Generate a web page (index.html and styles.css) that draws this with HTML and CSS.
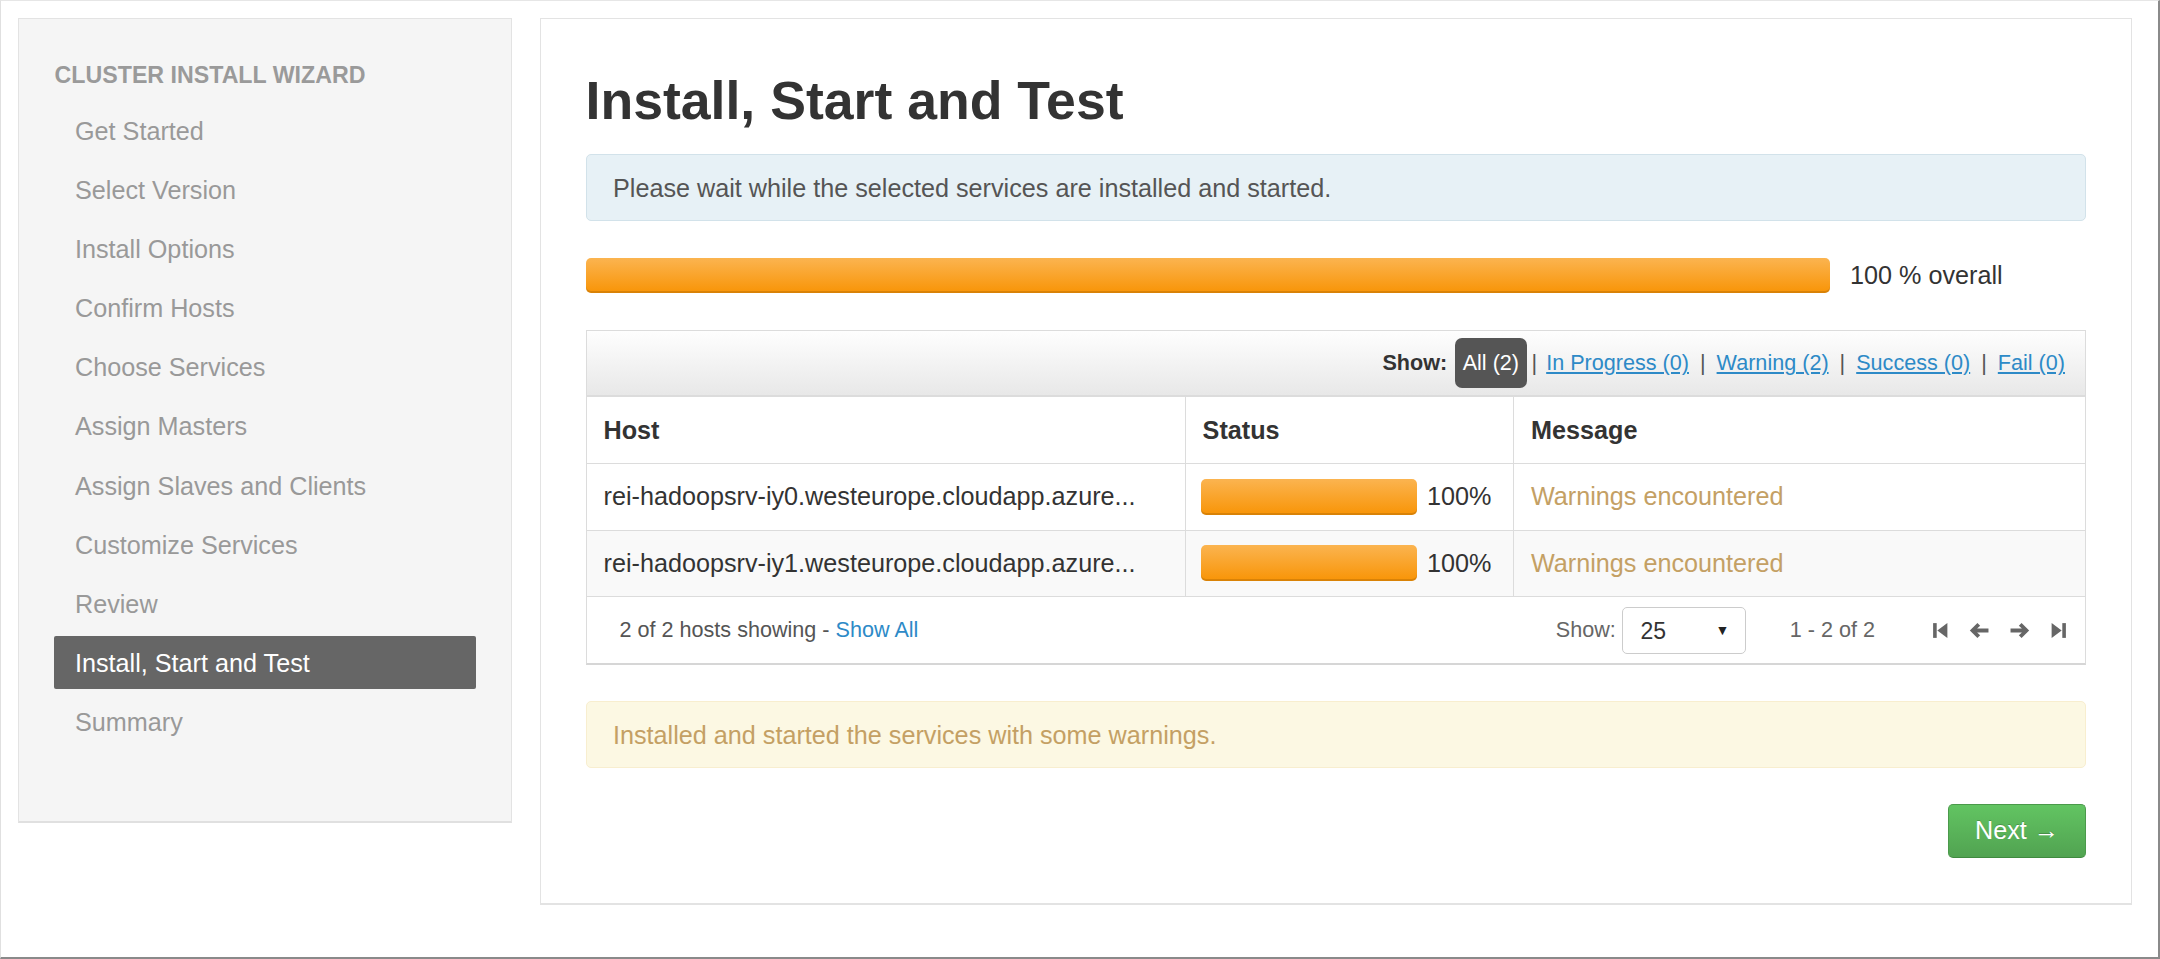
FILE: index.html
```html
<!DOCTYPE html>
<html lang="en">
<head>
<meta charset="utf-8">
<title>Install, Start and Test</title>
<link rel="stylesheet" href="styles.css">
</head>
<body>
<div class="window">
  <aside class="sidebar">
    <div class="nav-header">CLUSTER INSTALL WIZARD</div>
    <ul class="nav-list">
      <li>Get Started</li>
      <li>Select Version</li>
      <li>Install Options</li>
      <li>Confirm Hosts</li>
      <li>Choose Services</li>
      <li>Assign Masters</li>
      <li>Assign Slaves and Clients</li>
      <li>Customize Services</li>
      <li>Review</li>
      <li class="active">Install, Start and Test</li>
      <li>Summary</li>
    </ul>
  </aside>

  <main class="panel">
    <h1 class="title">Install, Start and Test</h1>
    <div class="alert alert-info">Please wait while the selected services are installed and started.</div>

    <div class="overall">
      <div class="bar bar-overall"></div>
      <span class="overall-label">100 % overall</span>
    </div>

    <div class="hosts">
      <div class="toolbar">
        <span class="show-label">Show:</span>
        <span class="badge">All (2)</span>
        <span class="sep first">|</span>
        <a class="filter" href="#">In Progress (0)</a>
        <span class="sep">|</span>
        <a class="filter" href="#">Warning (2)</a>
        <span class="sep">|</span>
        <a class="filter" href="#">Success (0)</a>
        <span class="sep">|</span>
        <a class="filter" href="#">Fail (0)</a>
      </div>
      <table class="host-table">
        <colgroup>
          <col class="col-host">
          <col class="col-status">
          <col class="col-msg">
        </colgroup>
        <thead>
          <tr><th>Host</th><th>Status</th><th>Message</th></tr>
        </thead>
        <tbody>
          <tr>
            <td>rei-hadoopsrv-iy0.westeurope.cloudapp.azure...</td>
            <td><div class="status"><div class="bar bar-row"></div><span>100%</span></div></td>
            <td class="warn-text">Warnings encountered</td>
          </tr>
          <tr class="odd">
            <td>rei-hadoopsrv-iy1.westeurope.cloudapp.azure...</td>
            <td><div class="status"><div class="bar bar-row"></div><span>100%</span></div></td>
            <td class="warn-text">Warnings encountered</td>
          </tr>
        </tbody>
      </table>
      <div class="table-footer">
        <span class="showing">2 of 2 hosts showing - <a href="#" class="link">Show All</a></span>
        <span class="footer-show">Show:</span>
        <div class="select"><span>25</span><span class="caret">&#9660;</span></div>
        <span class="range">1 - 2 of 2</span>
        <div class="pager">
          <svg class="pg-first" width="15" height="19" viewBox="0 0 14 18"><rect x="0" y="2" width="3.4" height="14"/><path d="M13.5 2 L4 9 L13.5 16 Z"/></svg>
          <svg class="pg-prev" width="20" height="17" viewBox="0 0 19 16"><path d="M8 0.8 L0.8 8 L8 15.2 L10.6 12.6 L7.7 9.8 H18.5 V6.2 H7.7 L10.6 3.4 Z"/></svg>
          <svg class="pg-next" width="20" height="17" viewBox="0 0 19 16"><path d="M11 0.8 L18.2 8 L11 15.2 L8.4 12.6 L11.3 9.8 H0.5 V6.2 H11.3 L8.4 3.4 Z"/></svg>
          <svg class="pg-last" width="15" height="19" viewBox="0 0 14 18"><path d="M0.5 2 L10 9 L0.5 16 Z"/><rect x="10.6" y="2" width="3.4" height="14"/></svg>
        </div>
      </div>
    </div>

    <div class="alert alert-warning">Installed and started the services with some warnings.</div>

    <div class="actions">
      <button class="btn-next">Next &rarr;</button>
    </div>
  </main>
</div>
</body>
</html>
```

FILE: styles.css
```css
* { box-sizing: border-box; }

html, body {
  margin: 0;
  padding: 0;
  background: #ffffff;
}

body {
  font-family: "Liberation Sans", Arial, Helvetica, sans-serif;
  color: #333333;
}

.window {
  width: 2160px;
  height: 959px;
  border-top: 1px solid #e6e6e6;
  border-left: 1px solid #e0e0e0;
  border-right: 2px solid #8a8a8a;
  border-bottom: 2px solid #8a8a8a;
  padding: 17px 26px 0 17px;
  display: flex;
  align-items: flex-start;
  gap: 28px;
  overflow: hidden;
}

/* ---------- Sidebar ---------- */
.sidebar {
  width: 494px;
  height: 805px;
  flex: none;
  background: #f5f5f5;
  border: 1px solid #e3e3e3;
  border-bottom: 2px solid #e0e0e0;
  padding: 41px 34.6px 0 34.6px;
}

.nav-header {
  font-size: 23.2px;
  line-height: 30px;
  font-weight: bold;
  color: #9a9a9a;
  text-transform: uppercase;
  padding-left: 1px;
  margin-bottom: 13.5px;
}

.nav-list {
  list-style: none;
  margin: 0;
  padding: 0;
}

.nav-list li {
  height: 53px;
  line-height: 53px;
  padding: 1px 0 0 21.4px;
  margin-bottom: 6.2px;
  font-size: 25.2px;
  color: #999999;
  white-space: nowrap;
}

.nav-list li.active {
  background: #666666;
  color: #ffffff;
  border-radius: 2px;
}

/* ---------- Main panel ---------- */
.panel {
  width: 1592px;
  flex: none;
  background: #ffffff;
  border: 1px solid #e3e3e3;
  border-bottom: 2px solid #e3e3e3;
  padding: 50.5px 45px 45px 44.5px;
}

.title {
  margin: 0;
  font-size: 53.6px;
  line-height: 60px;
  font-weight: bold;
  color: #333333;
}

.alert {
  font-size: 25.2px;
  line-height: 36px;
  border-radius: 5px;
  padding: 15px 26.5px 14px;
}

.alert-info {
  margin-top: 24.5px;
  background: #e7f1f6;
  border: 1px solid #d2e2ea;
  color: #555555;
}

.alert-warning {
  margin-top: 35.5px;
  background: #fcf8e3;
  border: 1px solid #f8eecf;
  color: #c4a064;
  padding: 15px 26.5px 14.5px;
}

/* progress */
.overall {
  margin-top: 36.6px;
  display: flex;
  align-items: center;
  height: 35.5px;
}

.bar {
  background: linear-gradient(to bottom, #fbb450, #f89406);
  border-radius: 5px;
  box-shadow: inset 0 -2px 0 rgba(0, 0, 0, 0.12);
}

.bar-overall {
  width: 1244px;
  height: 35.5px;
}

.overall-label {
  margin-left: 20.5px;
  font-size: 25.2px;
  color: #333333;
}

/* hosts table */
.hosts {
  margin-top: 37px;
  border: 1px solid #dcdcdc;
  border-bottom: 2px solid #d6d6d6;
}

.toolbar {
  height: 66px;
  background: linear-gradient(to bottom, #fefefe, #e8e8e8);
  border-bottom: 2px solid #dcdcdc;
  display: flex;
  align-items: center;
  justify-content: flex-end;
  padding-right: 20px;
  font-size: 21.6px;
}

.show-label {
  font-weight: bold;
  color: #333333;
  margin-right: 8px;
}

.badge {
  background: #555555;
  color: #ffffff;
  height: 50px;
  line-height: 50px;
  padding: 0 7.5px;
  border-radius: 7px;
}

.sep {
  color: #555555;
  margin: 0 11px;
}

.sep.first {
  margin-left: 5px;
  margin-right: 9px;
}

.filter {
  color: #2d8ac7;
  text-decoration: underline;
}

.host-table {
  width: 100%;
  border-collapse: collapse;
  table-layout: fixed;
  font-size: 25.2px;
}

.col-host { width: 598.6px; }
.col-status { width: 328.4px; }

.host-table th,
.host-table td {
  height: 66.5px;
  padding: 0 16px 0 17px;
  text-align: left;
  vertical-align: middle;
  border-bottom: 1px solid #dcdcdc;
  border-right: 1px solid #dcdcdc;
  white-space: nowrap;
  overflow: hidden;
}

.host-table th:last-child,
.host-table td:last-child {
  border-right: none;
}

.host-table th {
  font-weight: bold;
  color: #333333;
}

.host-table td {
  color: #333333;
}

.host-table tr.odd td {
  background: #f9f9f9;
}

.host-table td:nth-child(2) {
  padding-left: 15.5px;
}

.status {
  display: flex;
  align-items: center;
}

.bar-row {
  width: 216px;
  height: 36px;
}

.status span {
  margin-left: 10px;
}

.host-table td.warn-text {
  color: #c4a064;
}

.table-footer {
  height: 66px;
  display: flex;
  align-items: center;
  padding: 0 19px 0 33px;
  font-size: 21.6px;
  color: #666666;
}

.showing {
  flex: 1;
  color: #555555;
}

.link {
  color: #2d8ac7;
  text-decoration: none;
}

.footer-show {
  color: #666666;
}

.select {
  margin-left: 6.6px;
  width: 124px;
  height: 47px;
  border: 1px solid #cccccc;
  border-radius: 5px;
  background: #ffffff;
  display: flex;
  align-items: center;
  justify-content: space-between;
  padding: 3px 16px 0 17px;
  font-size: 23px;
  color: #333333;
}

.caret {
  font-size: 14px;
  color: #222222;
  margin-top: -4px;
}

.range {
  margin-left: 43.4px;
  color: #666666;
}

.pager {
  margin-left: 58px;
  display: flex;
  align-items: center;
  gap: 21px;
  fill: #666666;
}

.pager svg {
  display: block;
}

/* actions */
.actions {
  margin-top: 35.5px;
  display: flex;
  justify-content: flex-end;
}

.btn-next {
  width: 138px;
  height: 54.3px;
  font-family: "Liberation Sans", Arial, Helvetica, sans-serif;
  font-size: 25.2px;
  color: #ffffff;
  background: linear-gradient(to bottom, #62c462, #51a351);
  border: 1px solid #4b9a4b;
  border-bottom-color: #3f8a3f;
  border-radius: 5px;
  padding: 0;
  text-shadow: 0 -1px 0 rgba(0, 0, 0, 0.2);
}
```
